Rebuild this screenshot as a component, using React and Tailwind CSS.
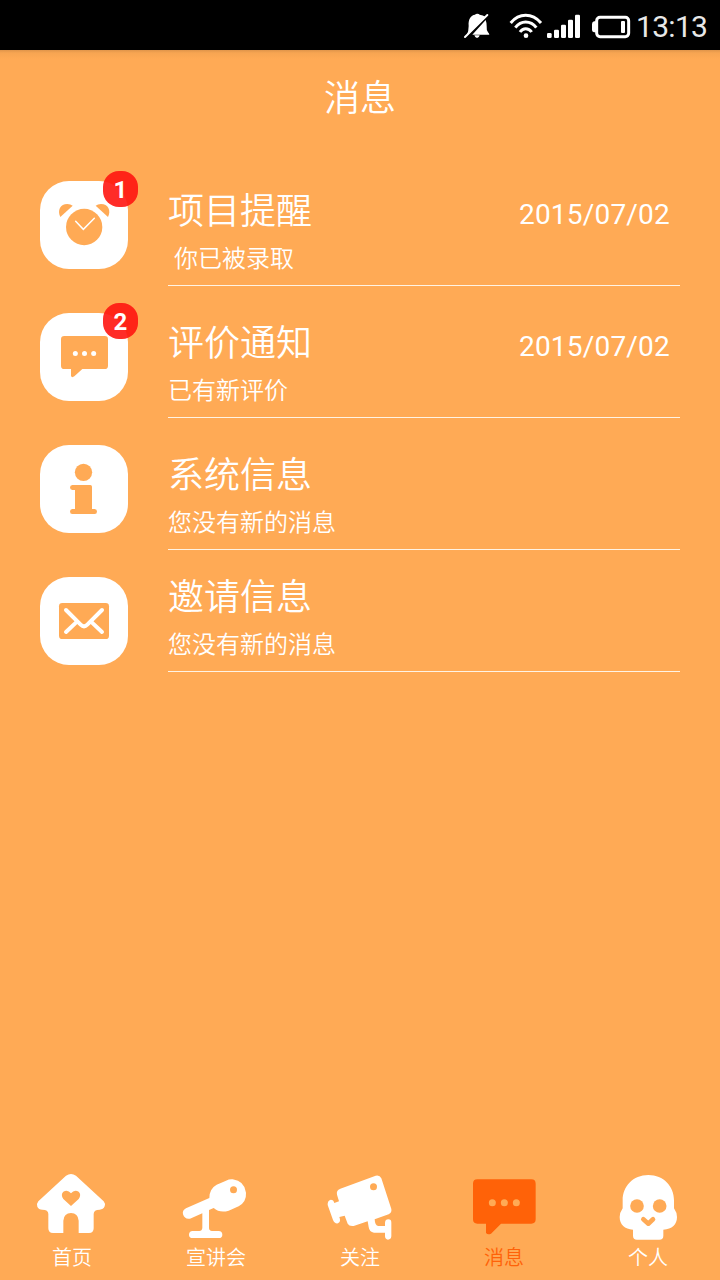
function StatusBar() {
  return (
    <div className="flex h-[50px] shrink-0 items-center bg-black pl-[462px]">
      <svg className="h-[50px] w-[170px] shrink-0" viewBox="36 0 510 150" fill="#fff">
        <path d="M50 107 Q56 96 56 78 C54 58 63 46 75 44.500 Q77 41 82 41 Q87 41 89 44.500 Q99 46 107 51 Z" />
        <path d="M107 60 L67 104 H118 Q118 101 114 97 Q109 90 110 78 Q110 68 107 60 Z" />
        <path d="M73 106 H89 Q87 114 81 114 Q75 113 73 106 Z" />
        <path d="M45 111 L112 45" stroke="#fff" strokeWidth="6" strokeLinecap="round" />
        <g fill="none" stroke="#fff" strokeWidth="9">
          <path d="M182 69 Q201 46 227 46 Q253 46 273 69" />
          <path d="M196 83 Q209 66 227 66 Q246 66 259 83" />
          <path d="M210 96 Q217 86 227 86 Q238 86 245 96" />
        </g>
        <circle cx="228" cy="107" r="7" />
        <rect x="291" y="99" width="14" height="15" rx="4" />
        <rect x="312" y="89" width="15" height="25" rx="4" />
        <rect x="333" y="74" width="15" height="40" rx="4" />
        <rect x="354" y="59" width="15" height="55" rx="4" />
        <rect x="375" y="44" width="15" height="70" rx="4" />
        <rect x="440" y="52" width="96" height="58" rx="10" fill="none" stroke="#fff" strokeWidth="9" />
        <path d="M439 64 H432 Q426 66 426 72 V90 Q426 96 432 97 H439 Z" />
        <rect x="513" y="63" width="12" height="36" rx="3" />
      </svg>
      <span className="ml-[4px] mt-[4px] font-['Roboto',sans-serif] text-[30px] leading-none tracking-[-0.7px] text-[#e8e8e8]">
        13:13
      </span>
    </div>
  );
}

function AlarmIcon() {
  return (
    <svg className="size-[88px]" viewBox="60 63 264 264" fill="#ffaa55">
      <circle cx="192.500" cy="201" r="54.500" />
      <path d="M121 171 C111 151 121 132 142 132 Q152 132 158 137 Z" />
      <path d="M264 171 C274 151 264 132 243 132 Q233 132 227 137 Z" />
      <path d="M167 184 L190 208 L223 175" fill="none" stroke="#fff" strokeWidth="4.500" strokeLinecap="round" />
    </svg>
  );
}

function CommentIcon() {
  return (
    <svg className="size-[88px]" viewBox="60 69 264 264" fill="#ffaa55">
      <path d="M133 138 H254 Q264 138 264 148 V227 Q264 237 254 237 H187 L163 259 Q157 264 153 259 V237 H133 Q123 237 123 227 V148 Q123 138 133 138 Z" />
      <g fill="#fff">
        <circle cx="166" cy="190.500" r="7.500" />
        <circle cx="193.500" cy="190.500" r="7.500" />
        <circle cx="221" cy="190.500" r="7.500" />
      </g>
    </svg>
  );
}

function InfoIcon() {
  return (
    <svg className="size-[88px]" viewBox="60 45 264 264" fill="#ffaa55">
      <circle cx="190.500" cy="127" r="26" />
      <path d="M157 165 H211 Q216 165 216 170 V237 H224 Q231 238 231 244.500 Q231 252 224 252 H157 Q150 252 150 244.500 Q150 238 157 237 H165 V180 H157 Q150 179 150 172.500 Q150 165 157 165 Z" />
    </svg>
  );
}

function MailIcon() {
  return (
    <svg className="size-[88px]" viewBox="60 51 264 264">
      <rect x="117" y="129" width="150" height="108" rx="10" fill="#ffaa55" />
      <g fill="none" stroke="#fff" strokeWidth="12" strokeLinecap="round">
        <path d="M138 150 L182 194 Q192 204 202 194 L246 150" />
        <path d="M138 216 L171 185 M246 216 L213 185" />
      </g>
    </svg>
  );
}

function HomeIcon() {
  return (
    <svg className="h-[72px] w-20" viewBox="96 30 240 216" fill="#fff">
      <path d="M198 47 Q213 37 228 47 L311 124 Q317 131 314 139 Q310 149 299 149 Q281 149 281 162 V205 Q281 219 267 219 H236 V182 Q234 159 213 159 Q192 159 190 182 V219 H159 Q145 219 145 205 V162 Q145 149 127 149 Q116 149 112 140 Q109 131 115 124 Z" />
      <path d="M213 138 L190 117 Q181 104 190 95 Q203 87 213 100 Q223 87 236 95 Q245 104 236 117 Z" fill="#ffaa55" />
    </svg>
  );
}

function TalkIcon() {
  return (
    <svg className="h-[72px] w-20" viewBox="528 30 240 216" fill="#fff">
      <path d="M628 114 L558 145 Q546 151 549 163 Q554 179 570 176 L607 160 V204 Q606 213 598 213 H578 Q567 214 567 224 Q567 234 578 234 H656 Q667 234 667 224 Q667 214 656 213 H636 Q627 212 627 204 V150 L641 144 Q659 160 686 152 L716 139 Q740 125 738 98 Q734 63 698 58 Q688 57 678 62 L650 74 Q628 86 628 114 Z" />
      <circle cx="700.500" cy="89" r="10.500" fill="#ffaa55" />
    </svg>
  );
}

function CameraIcon() {
  return (
    <svg className="h-[72px] w-20" viewBox="60 30 240 216" fill="#fff">
      <path d="M121 86 L227 47 Q239 44 244 55 L274 147 Q276 158 266 163 L224 178 Q225 198 235 198 H255 V188 Q256 178 265 178 Q274 178 274 188 V229 Q273 239 264 239 Q255 238 255 229 V218 H222 Q208 216 206 201 L203 184 L161 198 Q148 200 143 191 L134 167 L118 171 Q124 185 114 190 Q104 192 99 180 L83 135 Q82 122 92 119 Q101 119 103 129 L117 124 L111 104 Q108 91 121 86 Z" />
      <circle cx="220.500" cy="80" r="10.500" fill="#ffaa55" />
    </svg>
  );
}

function MessageIcon() {
  return (
    <svg className="h-[72px] w-20" viewBox="492 30 240 216" fill="#ff6208">
      <path d="M532 58 H694 Q707 58 707 71 V178 Q707 191 694 191 H603 L573 221 Q564 226 558 219 V191 H532 Q519 191 519 178 V71 Q519 58 532 58 Z" />
      <g fill="#ffaa55">
        <circle cx="577" cy="128.500" r="10.500" />
        <circle cx="613" cy="128.500" r="10.500" />
        <circle cx="649" cy="128.500" r="10.500" />
      </g>
    </svg>
  );
}

function SkullIcon() {
  return (
    <svg className="h-[72px] w-20" viewBox="54 30 240 216" fill="#fff">
      <path d="M175 45 C221 45 252 79 252 121 V145 Q261 158 261 171 C261 193 246 208 220 209 V227 Q220 239 208 239 H141 Q129 239 129 227 V209 C104 208 89 193 89 171 Q89 158 98 145 V121 C98 79 129 45 175 45 Z" />
      <g fill="#ffaa55">
        <circle cx="141" cy="138" r="20.500" />
        <circle cx="209" cy="138" r="20.500" />
      </g>
      <path d="M160 178 L175 191 L189 178" fill="none" stroke="#ffaa55" strokeWidth="14" strokeLinecap="round" strokeLinejoin="round" />
    </svg>
  );
}

const messages = [
  { title: "项目提醒", text: "你已被录取", date: "2015/07/02", count: 1, Icon: AlarmIcon, height: "h-[132px]", pad: "pt-[27px]", indent: "pl-1.5" },
  { title: "评价通知", text: "已有新评价", date: "2015/07/02", count: 2, Icon: CommentIcon, height: "h-[132px]", pad: "pt-[27px]", indent: "" },
  { title: "系统信息", text: "您没有新的消息", Icon: InfoIcon, height: "h-[132px]", pad: "pt-[27px]", indent: "" },
  { title: "邀请信息", text: "您没有新的消息", Icon: MailIcon, height: "h-[122px]", pad: "pt-[17px]", indent: "" },
];

const tabs = [
  { label: "首页", Icon: HomeIcon },
  { label: "宣讲会", Icon: TalkIcon },
  { label: "关注", Icon: CameraIcon },
  { label: "消息", Icon: MessageIcon, active: true },
  { label: "个人", Icon: SkullIcon },
];

function MessageRow({ title, text, date, count, Icon, height, pad, indent }) {
  return (
    <li className={`flex gap-10 px-10 ${height}`}>
      <div className="relative mt-[27px] size-[88px] shrink-0 rounded-[29px] bg-white">
        <Icon />
        {count && (
          <span className="absolute -right-2.5 -top-2.5 flex h-9 w-[35px] items-center justify-center rounded-[16px] bg-[#ff1511]/90 pt-0.5 font-['Roboto',sans-serif] text-[24px] font-bold leading-none text-white">
            {count}
          </span>
        )}
      </div>
      <div className={`flex flex-1 flex-col border-b border-[#fff3e4] ${pad}`}>
        <div className="flex items-center justify-between pr-2.5">
          <h2 className="text-[36px] font-[350] leading-[54px]">{title}</h2>
          {date && (
            <time className="pt-3.5 font-['Roboto',sans-serif] text-[28px] leading-none tracking-[0.2px]">{date}</time>
          )}
        </div>
        <p className={`pt-px text-[24px] font-[350] leading-[42px] ${indent}`}>{text}</p>
      </div>
    </li>
  );
}

export default function App() {
  return (
    <div className="flex h-[1280px] w-[720px] flex-col overflow-hidden bg-[#ffaa55] font-['Noto_Sans_CJK_SC',sans-serif] text-white">
      <StatusBar />
      <header className="flex h-[104px] shrink-0 justify-center bg-[linear-gradient(#e0954a,#f7a552_3px,#ffaa55_9px)] pt-[18px]">
        <h1 className="text-[36px] font-[350] leading-[54px]">消息</h1>
      </header>
      <ul className="flex-1">
        {messages.map((m) => (
          <MessageRow key={m.title} {...m} />
        ))}
      </ul>
      <nav className="grid h-[110px] shrink-0 grid-cols-5">
        {tabs.map(({ label, Icon, active }) => (
          <button key={label} className={`flex flex-col items-center ${active ? "text-[#ff6208]" : ""}`}>
            <Icon />
            <span className="text-[20px] font-[350] leading-[30px]">{label}</span>
          </button>
        ))}
      </nav>
    </div>
  );
}
